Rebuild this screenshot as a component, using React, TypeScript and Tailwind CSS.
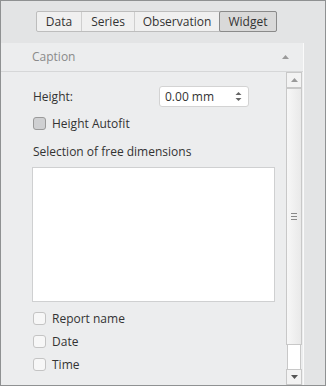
const TABS = [
  { t: "Data", w: "w-[44px]" },
  { t: "Series", w: "w-[53px]" },
  { t: "Observation", w: "w-[85px]" },
  { t: "Widget", w: "w-[58px]" },
];
const ACTIVE = "Widget";

function Check({ label, grey }: { label: string; grey?: boolean }) {
  return (
    <div className="flex items-center gap-[6px] h-[13px]">
      <span
        className={`w-[13px] h-[13px] rounded-[3px] border ${
          grey ? "border-[#9a9a9a] bg-[#cfd0d2]" : "border-[#c4c4c4] bg-[#f7f7f7]"
        }`}
      />
      <span className="text-[#333]">{label}</span>
    </div>
  );
}

export default function App() {
  return (
    <div
      className="w-[326px] h-[386px] border border-[#8f9192] bg-[#e3e4e5] flex flex-col text-[12px] overflow-hidden"
      style={{ fontFamily: '"Open Sans", sans-serif' }}
    >
      <div className="flex pt-[10px] pl-[35px] h-[42px]">
        <div className="flex h-[21px] border border-[#bdbdbd] rounded-[2px] bg-[#f0f0f0]">
          {TABS.map(({ t, w }, i) => (
            <div
              key={t}
              className={`${w} flex items-center justify-center text-[12px] text-[#333] ${
                i > 0 && t !== ACTIVE ? "border-l border-[#cfcfcf]" : ""
              } ${
                t === ACTIVE
                  ? "bg-[#d9d9d9] border border-[#8a8a8a] rounded-[2px] -my-px -mr-px"
                  : ""
              }`}
            >
              {t}
            </div>
          ))}
        </div>
      </div>
      <div className="flex-1 flex flex-col w-[303px] bg-[#ecedee] border-r border-[#fafafa]">
        <div className="h-[29px] flex items-center justify-between pl-[31px] pr-[14px] border-b border-[#d6d7d8] text-[#8a8a8a] text-[12px]">
          <span>Caption</span>
          <svg width="7" height="4" viewBox="0 0 7 4">
            <path d="M0 4 L3.5 0 L7 4 Z" fill="#9a9a9a" />
          </svg>
        </div>
        <div className="flex-1 flex">
          <div className="flex-1 pl-[31px] pr-[11px] pt-[14px] flex flex-col">
            <div className="flex items-center h-[21px]">
              <span className="text-[#333] pl-px w-[127px]">Height:</span>
              <div className="w-[90px] h-[21px] bg-white border border-[#d3d3d3] rounded-[3px] flex items-center justify-between pl-[5px] pr-[6px] text-[#333]">
                <span>0.00 mm</span>
                <svg width="7" height="11" viewBox="0 0 7 11">
                  <path d="M0.5 4 L3.5 1 L6.5 4 Z" fill="#666" />
                  <path d="M0.5 7 L3.5 10 L6.5 7 Z" fill="#666" />
                </svg>
              </div>
            </div>
            <div className="mt-[10px] pl-px">
              <Check label="Height Autofit" grey />
            </div>
            <div className="mt-[14px] leading-[16px] text-[#333] pl-px">
              Selection of free dimensions
            </div>
            <div className="mt-[7px] h-[135px] bg-white border border-[#cfd0d1]" />
            <div className="mt-[10px] flex flex-col gap-[10px] pl-px">
              <Check label="Report name" />
              <Check label="Date" />
              <Check label="Time" />
            </div>
          </div>
          <div className="w-[16px] mr-[1px] flex flex-col">
            <div className="h-[16px] border border-[#c8c8c8] bg-[#f3f3f3] flex items-center justify-center">
              <svg width="7" height="4" viewBox="0 0 7 4">
                <path d="M0 4 L3.5 0 L7 4 Z" fill="#9a9a9a" />
              </svg>
            </div>
            <div className="h-[257px] border border-[#c8c8c8] bg-gradient-to-r from-[#f7f7f7] to-[#e9e9e9] flex items-center justify-center">
              <div className="flex flex-col gap-[2px]">
                <div className="w-[6px] h-px bg-[#888]" />
                <div className="w-[6px] h-px bg-[#888]" />
                <div className="w-[6px] h-px bg-[#888]" />
              </div>
            </div>
            <div className="flex-1 border-x border-[#c8c8c8] bg-white mx-[1px]" />
            <div className="h-[16px] border border-[#c8c8c8] bg-[#f3f3f3] flex items-center justify-center">
              <svg width="7" height="4" viewBox="0 0 7 4">
                <path d="M0 0 L3.5 4 L7 0 Z" fill="#555" />
              </svg>
            </div>
          </div>
        </div>
      </div>
    </div>
  );
}
